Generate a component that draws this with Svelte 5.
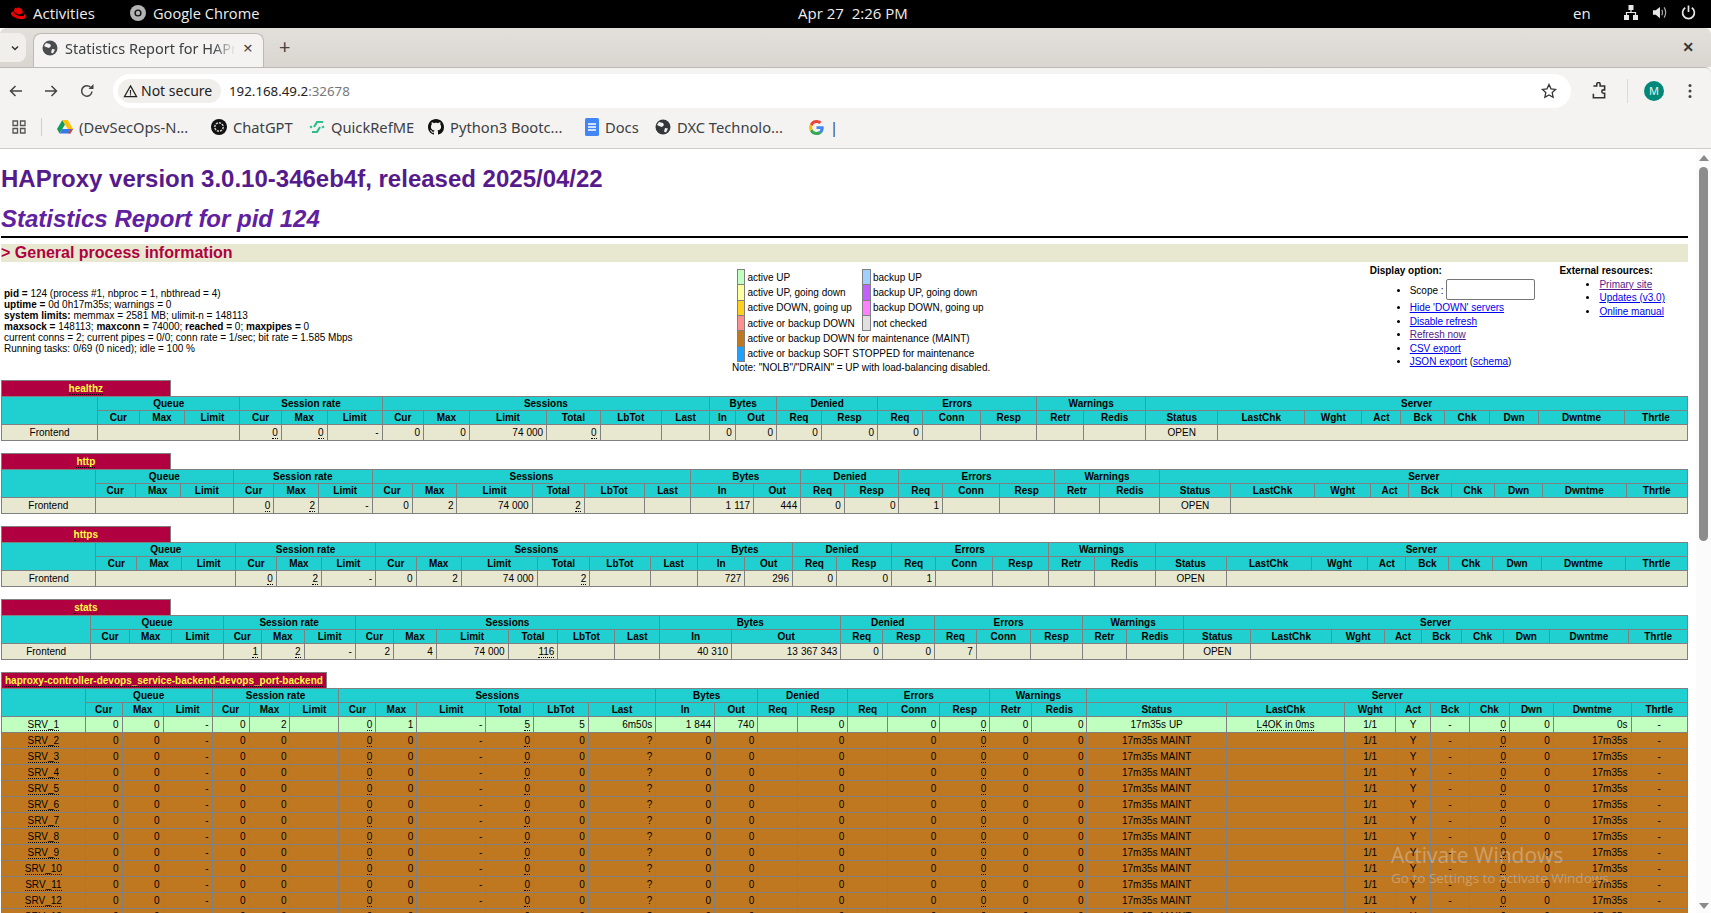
<script>
  const head1 = [['',1,2],['Queue',3],['Session rate',3],['Sessions',6],['Bytes',2],['Denied',2],['Errors',3],['Warnings',2],['Server',9]];
  const head2 = ['Cur','Max','Limit','Cur','Max','Limit','Cur','Max','Limit','Total','LbTot','Last','In','Out','Req','Resp','Req','Conn','Resp','Retr','Redis','Status','LastChk','Wght','Act','Bck','Chk','Dwn','Dwntme','Thrtle'];

  const fronts = [
    { name: 'healthz', rate: ['0', '0'], sess: ['0', '0', '0'], bytes: ['0', '0'], denied: ['0', '0'], err: '0' },
    { name: 'http', rate: ['0', '2'], sess: ['0', '2', '2'], bytes: [['', '1', '117'], '444'], denied: ['0', '0'], err: '1' },
    { name: 'https', rate: ['0', '2'], sess: ['0', '2', '2'], bytes: ['727', '296'], denied: ['0', '0'], err: '1' },
    { name: 'stats', rate: ['1', '2'], sess: ['2', '4', '116'], bytes: [['4', '0', '310'], ['1', '3', '36', '7', '343']], denied: ['0', '0'], err: '7' }
  ];

  const servers = Array.from({ length: 42 }, (_, i) => {
    const up = i === 0;
    return {
      name: 'SRV_' + (i + 1), up,
      rate: up ? '2' : '0', max: up ? '1' : '0', total: up ? '5' : '0', last: up ? '6m50s' : '?',
      inb: up ? ['', '1', '844'] : '0', out: up ? '740' : '0',
      status: up ? '17m35s UP' : '17m35s MAINT', chk: up ? 'L4OK in 0ms' : '', down: up ? '0s' : '17m35s'
    };
  });

  const legend = [
    ['active_up', 'active UP', 'backup_up', 'backup UP'],
    ['active_gd', 'active UP, going down', 'backup_gd', 'backup UP, going down'],
    ['active_gu', 'active DOWN, going up', 'backup_gu', 'backup DOWN, going up'],
    ['down', 'active or backup DOWN', 'nocheck', 'not checked'],
    ['maint', 'active or backup DOWN for maintenance (MAINT)'],
    ['soft', 'active or backup SOFT STOPPED for maintenance']
  ];
</script>

{#snippet num(v)}
  {#if Array.isArray(v)}{#each v as part, i}{#if i % 2 === 1}<span class="rls">{part}</span>{:else}{part}{/if}{/each}{:else}{v}{/if}
{/snippet}

{#snippet heads()}
  <tr class="titre">
    {#each head1 as h}<th colspan={h[1]} rowspan={h[2] || 1}>{h[0]}</th>{/each}
  </tr>
  <tr class="titre">
    {#each head2 as h}<th>{h}</th>{/each}
  </tr>
{/snippet}

{#snippet title(name)}
  <table class="tbl full">
    <tbody>
      <tr><th class="pxname w10"><a href="#top" class="px">{name}</a></th><th class="empty"></th></tr>
    </tbody>
  </table>
{/snippet}

<div class="screen">
  <header class="gnome">
    <svg class="hat" viewBox="0 0 18 14" width="17" height="14"><path fill="#e00" d="M11 8c1 0 2.500-.2 2.500-1.400 0-.1 0-.2 0-.3l-.6-2.600c-.1-.6-.3-.9-1.300-1.400C10.300 2 8.700 1.300 8.300 1.300c-.5 0-.6.6-1.100.6-.5 0-.9-.4-1.400-.4-.5 0-.8.300-1 .9 0 0-.7 1.900-.8 2.200v.2c0 1 3.800 3.900 7 3.900zm4.300-.5c.1.600.1.700.1.700 0 1.300-1.400 2-3.300 2-4.200 0-7.900-2.500-7.900-4.100 0-.2 0-.4.100-.6C2.900 5.600 1 5.900 1 7.500c0 2.700 6.300 6 11.300 6 3.800 0 4.800-1.800 4.800-3.200 0-1.100-.7-2.300-1.800-2.800z"/></svg>
    <span class="activities">Activities</span>
    <svg class="gchrome" viewBox="0 0 16 16" width="16" height="16"><circle cx="8" cy="8" r="8" fill="#b4b4b4"/><circle cx="8" cy="8" r="3.600" fill="#111"/><circle cx="8" cy="8" r="2.200" fill="#b4b4b4"/></svg>
    <span class="appname">Google Chrome</span>
    <span class="clock">Apr 27&nbsp;&nbsp;2:26 PM</span>
    <span class="lang">en</span>
    <svg class="net" viewBox="0 0 14 15" width="14" height="15"><path fill="#e8e8e8" d="M4.500 0h5v5h-5zM0 10h5v5H0zM9 10h5v5H9z"/><path fill="none" stroke="#e8e8e8" stroke-width="1.200" d="M7 5v3M2.500 10V7.500h9V10"/></svg>
    <svg class="snd" viewBox="0 0 16 16" width="15" height="15"><path fill="#e8e8e8" d="M1 5.500h3L8.500 2v12L4 10.500H1z"/><path fill="none" stroke="#aaa" stroke-width="1.300" d="M10.500 5c.9 2 .9 4 0 6M13 2.500c2 3.500 2 7.500 0 11"/></svg>
    <svg class="pwr" viewBox="0 0 16 16" width="15" height="15"><path fill="none" stroke="#e8e8e8" stroke-width="1.800" d="M8 .5v7M4.500 3a6.300 6.300 0 1 0 7 0"/></svg>
  </header>

  <div class="tabstrip">
    <div class="tabdrop"><svg viewBox="0 0 10 10" width="10" height="10"><path fill="none" stroke="#333" stroke-width="1.500" d="M2 3.500l3 3 3-3"/></svg></div>
    <div class="tab">
      <svg viewBox="0 0 16 16" width="16" height="16"><circle cx="8" cy="8" r="7.500" fill="#4a4d50"/><path fill="#f4f3f1" d="M4 3l4 1 1 2-2 2-3-1-2-1zM10 9l3 .500-2 4-2-1z"/></svg>
      <span class="tabtitle">Statistics Report for HAPr</span>
      <span class="tabx">×</span>
    </div>
    <span class="newtab">+</span>
    <span class="winx">×</span>
  </div>

  <div class="toolbar">
    <svg class="tb back" viewBox="0 0 16 16" width="16" height="16"><path fill="none" stroke="#444" stroke-width="1.500" d="M14 8H2.500M7.500 3l-5 5 5 5"/></svg>
    <svg class="tb fwd" viewBox="0 0 16 16" width="16" height="16"><path fill="none" stroke="#444" stroke-width="1.500" d="M2 8h11.500M8.500 3l5 5-5 5"/></svg>
    <svg class="tb rel" viewBox="0 0 16 16" width="16" height="16"><path fill="none" stroke="#444" stroke-width="1.500" d="M13 8.500A5.200 5.200 0 1 1 11.500 4.300"/><path fill="#444" d="M9.500 6h5V1z"/></svg>
    <div class="omni">
      <div class="chip">
        <svg viewBox="0 0 16 16" width="15" height="15"><path fill="none" stroke="#222" stroke-width="1.300" d="M8 2l6.500 11.500h-13z"/><path fill="#222" d="M7.400 6.500h1.200v4H7.400zM7.400 11h1.200v1.200H7.400z"/></svg>
        <span>Not secure</span>
      </div>
      <span class="url">192.168.49.2<span class="port">:32678</span></span>
      <svg class="star" viewBox="0 0 16 16" width="16" height="16"><path fill="none" stroke="#333" stroke-width="1.300" d="M8 1.500l2 4.300 4.600.6-3.400 3.200.9 4.700L8 12l-4.100 2.300.9-4.700L1.400 6.400 6 5.800z"/></svg>
    </div>
    <svg class="ext" viewBox="0 0 16 16" width="18" height="18"><path fill="none" stroke="#333" stroke-width="1.400" d="M3 3.500h3V2a1.500 1.500 0 0 1 3 0v1.500h4v3.500h-1a1.500 1.500 0 0 0 0 3h1v4H3v-3.500"/></svg>
    <span class="vdiv"></span>
    <span class="avatar">M</span>
    <svg class="dots" viewBox="0 0 4 16" width="4" height="16"><circle cx="2" cy="2.500" r="1.500" fill="#444"/><circle cx="2" cy="8" r="1.500" fill="#444"/><circle cx="2" cy="13.500" r="1.500" fill="#444"/></svg>
  </div>

  <div class="bookmarks">
    <svg class="apps" viewBox="0 0 14 14" width="14" height="14"><path fill="none" stroke="#555" stroke-width="1.300" d="M1 1h4.500v4.500H1zM8.500 1H13v4.500H8.500zM1 8.500h4.500V13H1zM8.500 8.500H13V13H8.500z"/></svg>
    <span class="bdiv"></span>
    <div class="bm w1">
      <svg viewBox="0 0 16 14" width="16" height="14"><path fill="#0f9d58" d="M5.300 0L0 9l2.600 4.500L8 4.500z"/><path fill="#ffc107" d="M5.300 0h5.400L16 9h-5.300z"/><path fill="#3b78e7" d="M2.600 13.500h10.700L16 9H5.300z"/><path fill="#e0452f" d="M13.300 13.500H11L14 9h2z"/></svg>
      <span>(DevSecOps-N...</span>
    </div>
    <div class="bm w2">
      <svg viewBox="0 0 16 16" width="16" height="16"><circle cx="8" cy="8" r="8" fill="#111"/><circle cx="8" cy="8" r="4.200" fill="none" stroke="#ccc" stroke-width="1.500" stroke-dasharray="2.200 1"/></svg>
      <span>ChatGPT</span>
    </div>
    <div class="bm w3">
      <svg viewBox="0 0 16 16" width="16" height="16"><path fill="none" stroke="#2fbf8f" stroke-width="2.200" d="M5 8l3-5h6M11 8l-3 5H3"/><path fill="none" stroke="#2fbf8f" stroke-width="2.200" d="M2.500 9L1.500 7M13.500 7l1 2"/></svg>
      <span>QuickRefME</span>
    </div>
    <div class="bm w4">
      <svg viewBox="0 0 16 16" width="16" height="16"><path fill="#111" d="M8 0C3.580 0 0 3.580 0 8c0 3.540 2.290 6.530 5.470 7.590.4.070.55-.17.55-.38 0-.19-.01-.82-.01-1.490-2.010.37-2.530-.49-2.690-.94-.09-.23-.48-.94-.82-1.130-.28-.15-.68-.52-.01-.53.63-.01 1.080.58 1.230.82.72 1.210 1.870.87 2.330.66.070-.52.28-.87.51-1.070-1.780-.2-3.640-.89-3.640-3.950 0-.87.31-1.590.82-2.150-.08-.2-.36-1.020.08-2.120 0 0 .67-.21 2.200.82.64-.18 1.320-.27 2-.27s1.360.09 2 .27c1.530-1.040 2.200-.82 2.200-.82.44 1.100.16 1.920.08 2.120.51.56.82 1.270.82 2.150 0 3.070-1.870 3.750-3.650 3.950.29.25.54.73.54 1.480 0 1.070-.01 1.930-.01 2.200 0 .21.15.46.55.38A8.013 8.013 0 0 0 16 8c0-4.420-3.580-8-8-8z"/></svg>
      <span>Python3 Bootc...</span>
    </div>
    <div class="bm w5">
      <svg viewBox="0 0 14 18" width="14" height="18"><rect width="14" height="18" rx="1.500" fill="#4285f4"/><path stroke="#fff" stroke-width="1.500" d="M3 6h8M3 9h8M3 12h8"/></svg>
      <span>Docs</span>
    </div>
    <div class="bm w6">
      <svg viewBox="0 0 16 16" width="16" height="16"><circle cx="8" cy="8" r="7.500" fill="#33363a"/><path fill="#f4f3f1" d="M4 3l4 1 1 2-2 2-3-1-2-1zM10 9l3 .500-2 4-2-1z"/></svg>
      <span>DXC Technolo...</span>
    </div>
    <div class="bm w7">
      <svg viewBox="0 0 16 16" width="15" height="15"><path fill="#4285f4" d="M15.700 8.200c0-.6-.05-1-.15-1.500H8v3h4.300c-.1.800-.6 1.900-1.700 2.700l2.500 2c1.600-1.500 2.600-3.600 2.600-6.200z"/><path fill="#34a853" d="M8 16c2.200 0 4-.7 5.100-2l-2.500-2c-.7.500-1.500.8-2.600.8-2 0-3.700-1.300-4.300-3.200L1 11.600C2.300 14.300 5 16 8 16z"/><path fill="#fbbc05" d="M3.700 9.600a5 5 0 0 1 0-3.200L1 4.400a8 8 0 0 0 0 7.200z"/><path fill="#ea4335" d="M8 3.200c1.400 0 2.300.6 2.900 1.100L13.200 2C11.800.800 10.100 0 8 0 5 0 2.300 1.700 1 4.400l2.700 2C4.300 4.500 6 3.200 8 3.200z"/></svg>
      <span>|</span>
    </div>
  </div>

  <div class="viewport">
    <main class="page">
      <h1 id="top"><a href="#top" class="hlink">HAProxy version 3.0.10-346eb4f, released 2025/04/22</a></h1>
      <h2>Statistics Report for pid 124</h2>
      <hr class="hr" />
      <h3>&gt; General process information</h3>

      <table class="info">
        <tbody>
          <tr>
            <td class="i-left">
              <p>
                <b>pid = </b> 124 (process #1, nbproc = 1, nbthread = 4)<br />
                <b>uptime = </b> 0d 0h17m35s; warnings = 0<br />
                <b>system limits:</b> memmax = 2581 MB; ulimit-n = 148113<br />
                <b>maxsock = </b> 148113; <b>maxconn = </b> 74000; <b>reached = </b> 0; <b>maxpipes = </b> 0<br />
                current conns = 2; current pipes = 0/0; conn rate = 1/sec; bit rate = 1.585 Mbps<br />
                Running tasks: 0/69 (0 niced); idle = 100 %<br />
              </p>
            </td>
            <td class="i-mid">
              <table class="lgd">
                <tbody>
                  {#each legend as l}
                    <tr>
                      <td class={l[0]}>&nbsp;</td>
                      {#if l.length > 2}
                        <td class="noborder">{l[1]} &nbsp;</td>
                        <td class={l[2]}>&nbsp;</td>
                        <td class="noborder">{l[3]}</td>
                      {:else}
                        <td class="noborder" colspan="3">{l[1]}</td>
                      {/if}
                    </tr>
                  {/each}
                </tbody>
              </table>
              Note: "NOLB"/"DRAIN" = UP with load-balancing disabled.
            </td>
            <td class="i-opt">
              <b>Display option:</b>
              <ul>
                <li>Scope : <input class="scope" size="8" maxlength="31" /></li>
                <li><a href="#top" class="ln">Hide 'DOWN' servers</a></li>
                <li><a href="#top" class="ln">Disable refresh</a></li>
                <li><a href="#top" class="ln vis">Refresh now</a></li>
                <li><a href="#top" class="ln">CSV export</a></li>
                <li><a href="#top" class="ln">JSON export</a> (<a href="#top" class="ln">schema</a>)</li>
              </ul>
            </td>
            <td class="i-opt">
              <b>External resources:</b>
              <ul>
                <li><a href="#top" class="ln vis">Primary site</a></li>
                <li><a href="#top" class="ln">Updates (v3.0)</a></li>
                <li><a href="#top" class="ln">Online manual</a></li>
              </ul>
            </td>
          </tr>
        </tbody>
      </table>

      {#each fronts as f}
        {@render title(f.name)}
        <table class="tbl full">
          <tbody>
            {@render heads()}
            <tr class="frontend">
              <td class="ac">Frontend</td>
              <td colspan="3"></td>
              <td><u>{f.rate[0]}</u></td><td><u>{f.rate[1]}</u></td><td>-</td>
              <td>{f.sess[0]}</td><td>{f.sess[1]}</td><td>7<span class="rls">4</span>000</td><td><u>{f.sess[2]}</u></td><td></td><td></td>
              <td>{@render num(f.bytes[0])}</td><td>{@render num(f.bytes[1])}</td>
              <td>{f.denied[0]}</td><td>{f.denied[1]}</td>
              <td>{f.err}</td><td></td><td></td>
              <td></td><td></td>
              <td class="ac">OPEN</td>
              <td colspan="8"></td>
            </tr>
          </tbody>
        </table>
        <p class="gap">&nbsp;</p>
      {/each}

      {@render title('haproxy-controller-devops_service-backend-devops_port-backend')}
      <table class="tbl full">
        <tbody>
          {@render heads()}
          {#each servers as s}
            <tr class={s.up ? 'active_up' : 'maint'}>
              <td class="ac"><u>{s.name}</u></td>
              <td>0</td><td>0</td><td>-</td>
              <td>0</td><td>{s.rate}</td><td></td>
              <td><u>0</u></td><td>{s.max}</td><td>-</td><td><u>{s.total}</u></td><td>{s.total}</td><td>{s.last}</td>
              <td>{@render num(s.inb)}</td><td>{s.out}</td>
              <td></td><td>0</td>
              <td></td><td>0</td><td><u>0</u></td>
              <td>0</td><td>0</td>
              <td class="ac">{s.status}</td>
              <td class="ac">{#if s.chk}<u>{s.chk}</u>{/if}</td>
              <td class="ac">1/1</td><td class="ac">Y</td><td class="ac">-</td>
              <td><u>0</u></td><td>0</td><td>{s.down}</td><td class="ac">-</td>
            </tr>
          {/each}
          <tr class="frontend">
            <td class="ac">Backend</td>
            <td>0</td><td>0</td><td></td>
            <td>0</td><td>2</td><td></td>
            <td><u>0</u></td><td>1</td><td>7<span class="rls">4</span>000</td><td><u>5</u></td><td>5</td><td>6m50s</td>
            <td><span class="rls">1</span>844</td><td>740</td>
            <td>0</td><td>0</td>
            <td></td><td>0</td><td><u>0</u></td>
            <td>0</td><td>0</td>
            <td class="ac">17m35s UP</td><td></td>
            <td class="ac">1/1</td><td class="ac">1</td><td class="ac">0</td>
            <td></td><td>0</td><td>0s</td><td></td>
          </tr>
        </tbody>
      </table>
    </main>

    <aside class="scrollbar">
      <svg class="arrow" viewBox="0 0 10 6" width="10" height="6"><path fill="#8a8a8a" d="M5 0l5 6H0z"/></svg>
      <div class="thumb"></div>
      <svg class="arrow dn" viewBox="0 0 10 6" width="10" height="6"><path fill="#8a8a8a" d="M5 6l5-6H0z"/></svg>
    </aside>

    <div class="watermark">
      <div class="wm1">Activate Windows</div>
      <div class="wm2">Go to Settings to activate Windows.</div>
    </div>
  </div>
</div>

<style>
  :global(body) { margin: 0; background: #fff; }
  .screen { width: 1711px; height: 913px; overflow: hidden; display: flex; flex-direction: column; font-family: "Noto Sans", sans-serif; }

  .gnome { flex: 0 0 28px; box-sizing: border-box; padding-bottom: 3px; background: #000; color: #eee; display: flex; align-items: center; font-size: 15px; font-family: "Open Sans", sans-serif; }
  .hat { margin-left: 10px; }
  .activities { margin-left: 6px; width: 97px; }
  .gchrome { margin-left: 0; }
  .appname { margin-left: 7px; width: 152px; white-space: nowrap; font-size: 14.600px; }
  .clock { margin-left: 493px; width: 120px; white-space: nowrap; }
  .lang { margin-left: 655px; width: 18px; }
  .net { margin-left: 33px; }
  .snd { margin-left: 14px; }
  .pwr { margin-left: 14px; }

  .tabstrip { flex: 0 0 39px; background: linear-gradient(#e3e0dc, #d9d6d0); border-top-left-radius: 6px; border-top-right-radius: 6px; display: flex; align-items: flex-end; position: relative; color: #333; }
  .tabdrop { width: 26px; height: 29px; margin-bottom: 5px; padding-left: 3px; box-sizing: border-box; background: #f1efec; border-radius: 0 8px 8px 0; display: flex; align-items: center; justify-content: center; }
  .tab { width: 231px; height: 34px; margin-left: 7px; background: #f4f3f1; border: 1px solid #bdbab5; border-bottom: 0; border-radius: 8px 8px 0 0; display: flex; align-items: center; box-sizing: border-box; padding: 0 8px 6px 8px; }
  .tabtitle { margin-left: 7px; flex: 0 0 174px; white-space: nowrap; font-size: 14.500px; color: #3c4043; -webkit-mask-image: linear-gradient(90deg, #000 85%, transparent 98%); mask-image: linear-gradient(90deg, #000 85%, transparent 98%); }
  .tabx { margin-left: 4px; font-size: 17px; color: #444; }
  .newtab { margin-left: 15px; height: 39px; line-height: 37px; font-size: 20px; color: #444; }
  .winx { margin-left: auto; margin-right: 17px; height: 39px; line-height: 37px; font-size: 20px; font-weight: 600; color: #333; }

  .toolbar { flex: 0 0 41px; background: #f4f3f1; border-top: 1px solid #bdbab5; box-sizing: border-box; border-top-right-radius: 6px; display: flex; align-items: center; }
  .tb { flex: none; margin-top: 6px; }
  .back { margin-left: 8px; }
  .fwd { margin-left: 19px; }
  .rel { margin-left: 20px; }
  .omni { width: 1458px; height: 34px; margin-left: 18px; margin-top: 6px; background: #fff; border-radius: 17px; display: flex; align-items: center; padding: 0 5px; box-sizing: border-box; position: relative; }
  .chip { height: 24px; width: 103px; box-sizing: border-box; padding-left: 5px; border-radius: 12px; background: #f1efec; display: flex; align-items: center; gap: 3px; font-size: 14px; color: #222; white-space: nowrap; }
  .chip span { position: relative; top: -1px; }
  .url { margin-left: 8px; font-size: 13.300px; color: #222; }
  .port { color: #777; }
  .star { margin-left: auto; margin-right: 9px; }
  .ext { margin-left: 19px; margin-top: 6px; }
  .vdiv { width: 1px; height: 24px; background: #dcdad6; margin-left: 19px; margin-top: 6px; }
  .avatar { width: 20px; height: 20px; border-radius: 50%; background: #00897b; color: #e6f4f1; font-size: 11px; line-height: 20px; text-align: center; margin-left: 16px; margin-top: 6px; }
  .dots { margin-left: 24px; margin-top: 6px; }

  .bookmarks { flex: 0 0 41px; padding-bottom: 2px; background: #f4f3f1; border-bottom: 1px solid #cfccc7; box-sizing: border-box; display: flex; align-items: center; font-size: 14.700px; color: #3c4043; }
  .apps { margin-left: 12px; }
  .bdiv { width: 1px; height: 18px; background: #d0cec9; margin-left: 15px; margin-right: 15px; }
  .bm { display: flex; align-items: center; gap: 6px; white-space: nowrap; }
  .w1 { width: 154px; } .w2 { width: 98px; } .w3 { width: 119px; } .w4 { width: 157px; } .w5 { width: 70px; } .w6 { width: 154px; }

  .viewport { flex: 1; position: relative; display: flex; min-height: 0; background: #fff; }
  .page { flex: 0 0 1688px; box-sizing: border-box; padding-left: 1px; overflow: hidden; font-family: "Liberation Sans", Arial, sans-serif; font-size: 12px; color: #000; }

  h1 { font-size: 24px; margin: 16px 0 12px; color: #551a8b; font-weight: bold; }
  .hlink { color: #551a8b; text-decoration: none; }
  h2 { font-size: 24px; font-weight: bold; font-style: italic; color: #6020a0; margin: 0; }
  .hr { margin: 3px 0 6px; border: 0; border-bottom: 2px solid #000; height: 0; }
  h3 { font-size: 16px; font-weight: bold; color: #b00040; background: #e8e8d0; margin: 0; line-height: 18px; }

  .info { border-collapse: separate; width: 100%; border-spacing: 2px; }
  .info td { font-size: 10px; }
  .info .i-left { width: 1%; white-space: nowrap; padding: 1px; vertical-align: middle; }
  .info p { margin: 10px 0; }
  .i-mid { text-align: center; white-space: nowrap; padding: 1px; vertical-align: middle; }
  .i-opt { width: 1%; white-space: nowrap; vertical-align: top; padding: 1px; }
  ul { margin: 2.500px 0 10px; padding-left: 40px; }
  li { margin-top: 2.500px; margin-right: 20px; }
  .ln { color: #0000ee; text-decoration: underline; }
  .vis { color: #551a8b; }
  .scope { font-family: "Liberation Sans", Arial, sans-serif; font-size: 13.333px; box-sizing: border-box; width: 89px; height: 21px; padding: 1px 2px; border: 1px solid #767676; border-radius: 2px; background: #fff; }

  .lgd { border-collapse: collapse; margin: 0 auto; border: 0; }
  .lgd td { border: 1px solid gray; padding: 1.650px 2px; }
  .lgd td.noborder { border: 0; white-space: nowrap; text-align: left; }
  .active_up { background: #c0ffc0; }
  .active_gd { background: #ffffa0; }
  .active_gu { background: #ffd020; }
  .down { background: #ff9090; }
  .maint { background: #c07820; }
  .soft { background: #20a0ff; }
  .backup_up { background: #a0d0ff; }
  .backup_gd { background: #c060ff; }
  .backup_gu { background: #ff80ff; }
  .nocheck { background: #e0e0e0; }

  .tbl { border-collapse: collapse; border-style: none; font-size: 10px; }
  .full { width: 100%; }
  .tbl td { text-align: right; border: 1px solid gray; padding: 2px 3px; white-space: nowrap; font-size: 10px; }
  .tbl td.ac { text-align: center; }
  .tbl th { border: 1px solid gray; font-size: 10px; }
  .titre { background: #20d0d0; color: #000; font-weight: bold; text-align: center; }
  .frontend { background: #e8e8d0; }
  .tbl th.pxname { background: #b00040; color: #ffff40; font-weight: bold; border-style: solid solid none solid; padding: 2px 3px; white-space: nowrap; }
  .w10 { width: 10%; }
  .tbl th.empty { border-style: none; background: #fff; width: 90%; }
  .px { color: #ffff40; text-decoration: none; border-bottom: 1px dotted #000; }
  u { text-decoration: none; border-bottom: 1px dotted #000; }
  .rls { letter-spacing: 0.2em; margin-right: 1px; }
  .gap { margin: 0; height: 12px; font-size: 12px; line-height: 12px; }

  .scrollbar { position: absolute; right: 0; top: 0; bottom: 0; width: 15px; background: #fbfbfb; display: flex; flex-direction: column; align-items: center; }
  .arrow { margin-top: 6px; flex: none; }
  .thumb { width: 9px; height: 374px; margin-top: 6px; background: #8c8c8c; border-radius: 4.500px; }
  .dn { margin-top: auto; margin-bottom: 4px; }

  .watermark { position: absolute; left: 1391px; top: 694px; color: rgba(235, 235, 235, 0.35); font-family: "Open Sans", sans-serif; pointer-events: none; white-space: nowrap; }
  .wm1 { font-size: 21px; line-height: 24px; }
  .wm2 { font-size: 13.500px; line-height: 22px; }
</style>
